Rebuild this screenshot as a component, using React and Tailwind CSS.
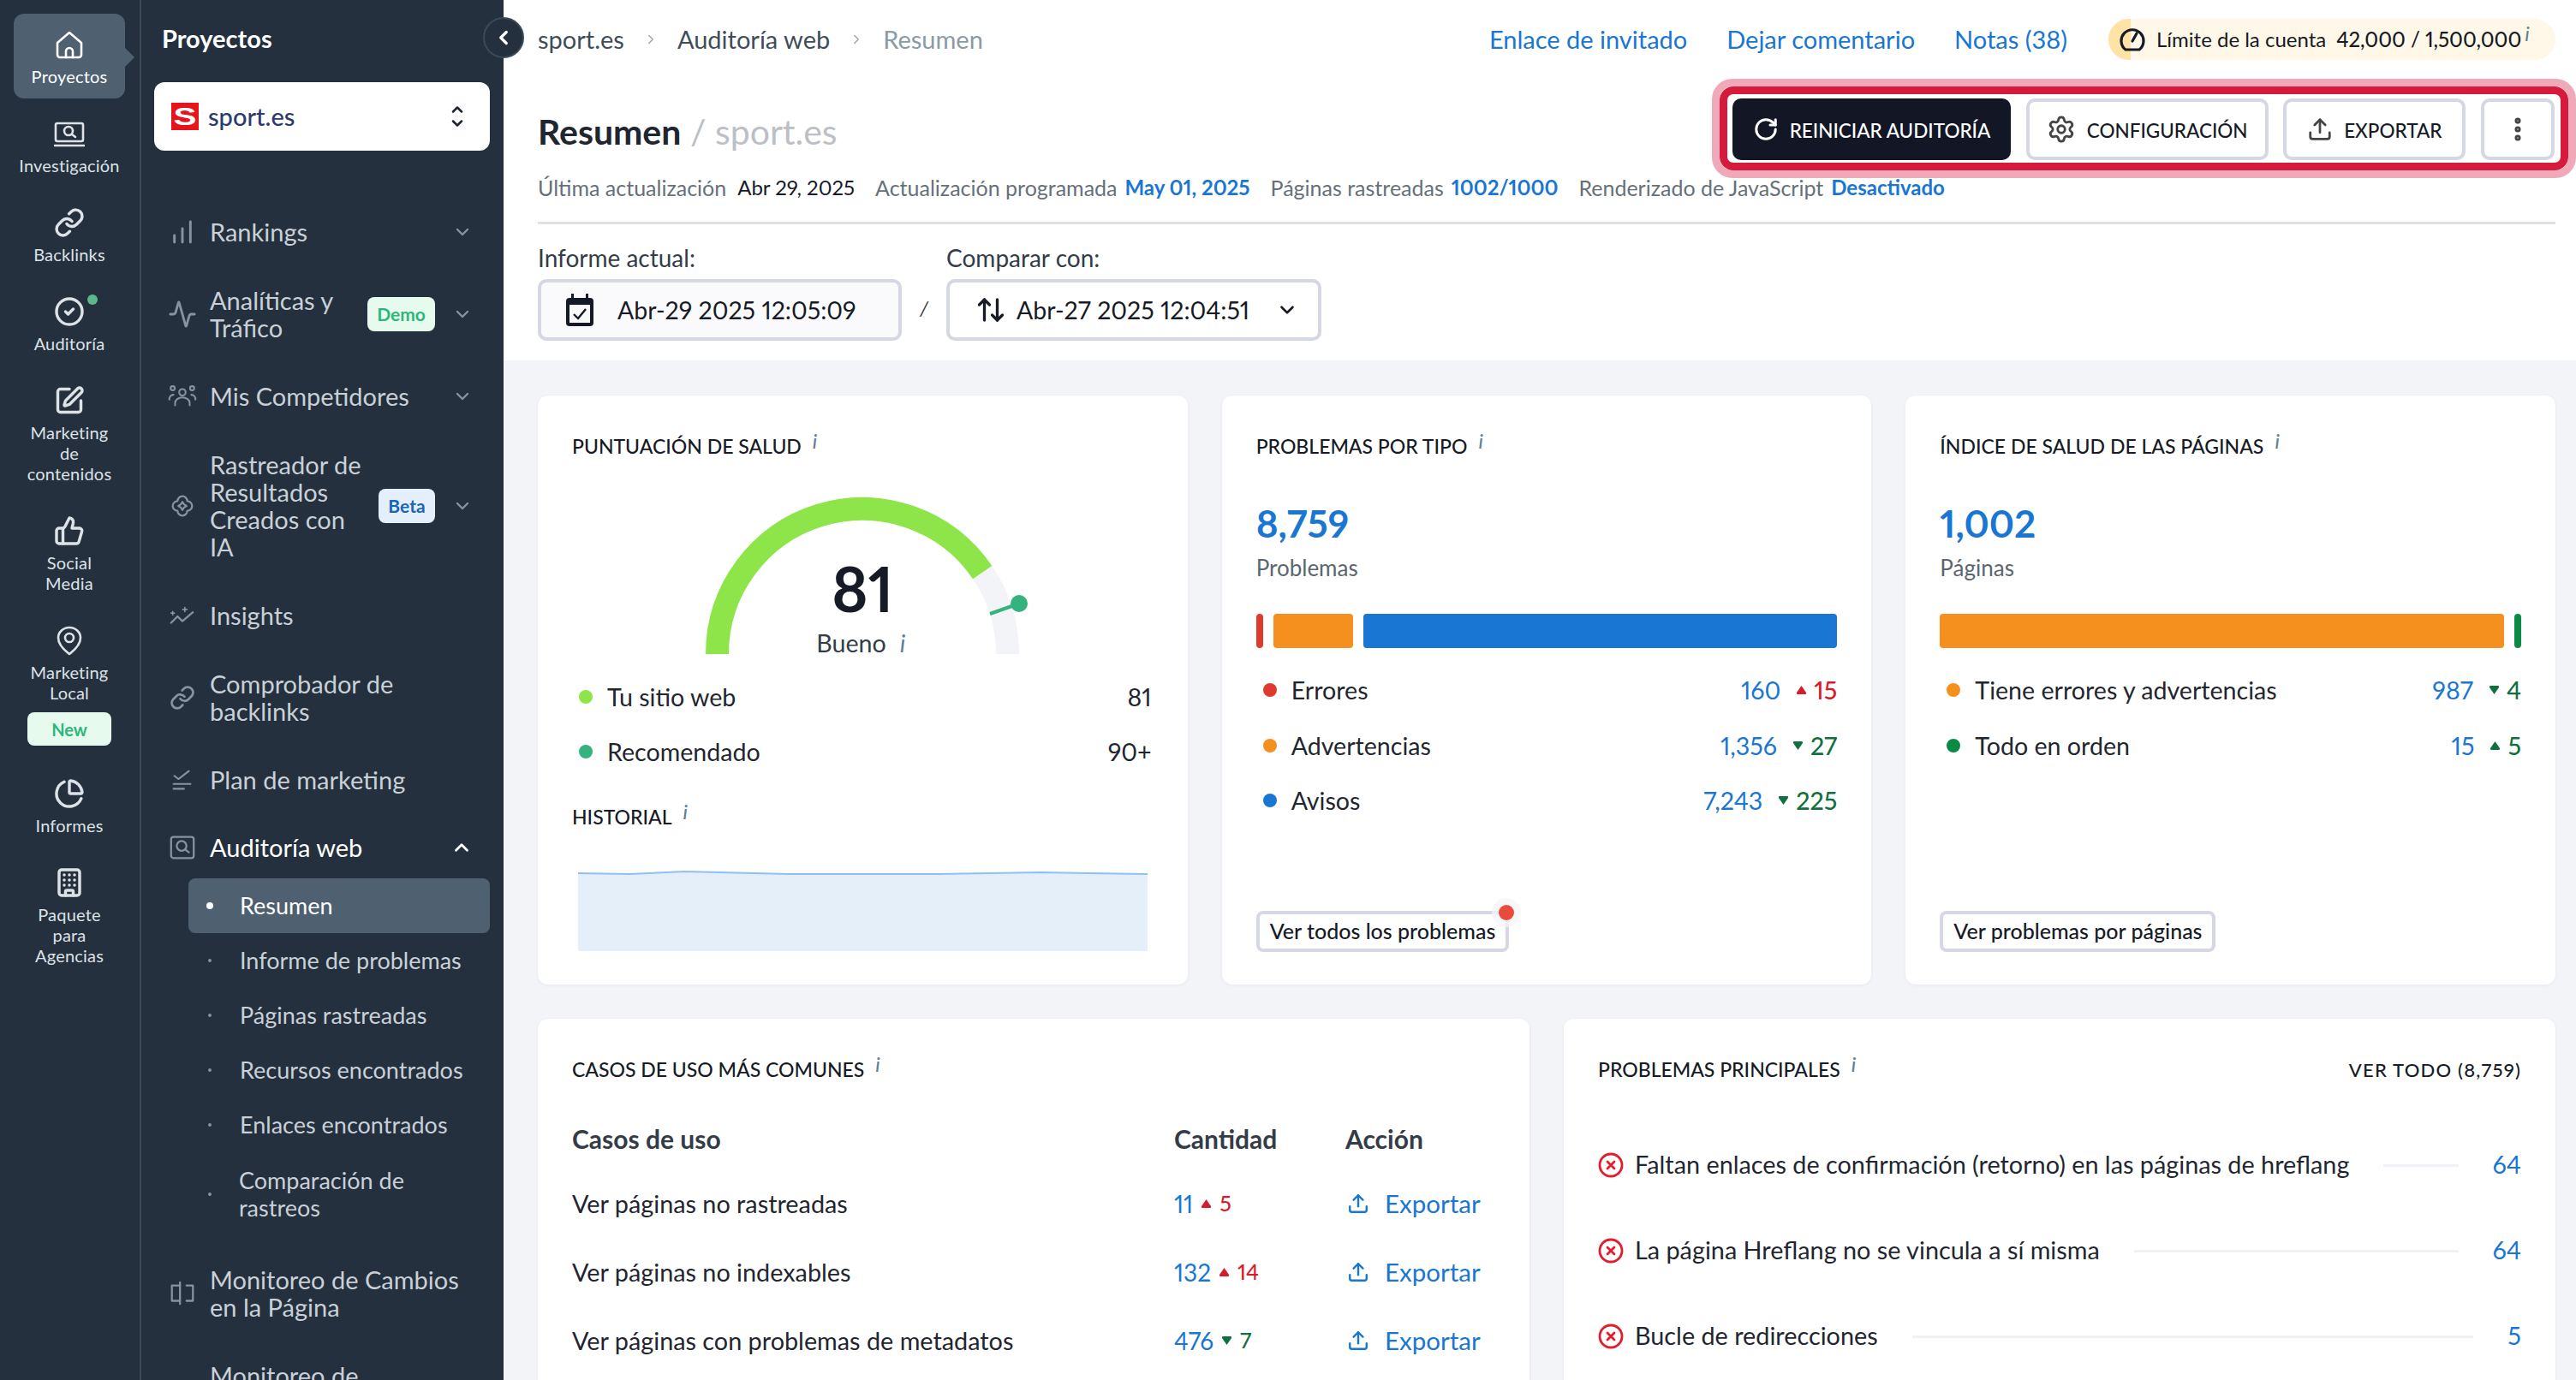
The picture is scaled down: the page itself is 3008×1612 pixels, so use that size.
import React from 'react';
import { Link, CircleCheck, SquarePen, ThumbsUp, ChartPie, Building, ChevronDown, ChevronUp, ChevronLeft, ChevronRight, RotateCw, Settings, Upload, EllipsisVertical, Activity, ChartNoAxesColumnIncreasing, ArrowUpDown } from 'lucide-react';

const I = ({ className = '' }) => <span className={`italic text-[#5e7f98] ${className}`}>i</span>;

const Svg = ({ size = 36, children, sw = 2.6, className = '' }) => (
  <svg width={size} height={size} viewBox="0 0 36 36" fill="none" stroke="currentColor" strokeWidth={sw} strokeLinecap="round" strokeLinejoin="round" className={className}>{children}</svg>
);

const HomeI = () => <Svg><path d="M4 16 L18 4 L32 16 V30 a3 3 0 0 1 -3 3 H7 a3 3 0 0 1 -3 -3Z" /><path d="M14 33 V26 a4 4 0 0 1 8 0 V33" /></Svg>;
const LaptopI = () => <Svg><rect x="2" y="6" width="32" height="21" rx="2" /><circle cx="17" cy="15" r="5" /><path d="M21 19 L25 22" /><path d="M1 32 H35" /></Svg>;
const PinI = () => <Svg><path d="M18 34 C10 28 5 22 5 15 a13 12 0 0 1 26 0 C31 22 26 28 18 34Z" /><circle cx="18" cy="15" r="5" /></Svg>;

const rail = [
  { icon: <HomeI />, label: 'Proyectos', active: true },
  { icon: <LaptopI />, label: 'Investigación' },
  { icon: <Link size={36} strokeWidth={2.3} />, label: 'Backlinks' },
  { icon: <CircleCheck size={36} strokeWidth={2.3} />, label: 'Auditoría', dot: true },
  { icon: <SquarePen size={36} strokeWidth={2.3} />, label: 'Marketing\nde\ncontenidos' },
  { icon: <ThumbsUp size={36} strokeWidth={2.3} />, label: 'Social\nMedia' },
  { icon: <PinI />, label: 'Marketing\nLocal', badge: 'New' },
  { icon: <ChartPie size={36} strokeWidth={2.3} />, label: 'Informes' },
  { icon: <Building size={36} strokeWidth={2.3} />, label: 'Paquete\npara\nAgencias' },
];

const UsersI = () => (
  <Svg size={34} sw={2.2}><circle cx="18" cy="13" r="4" /><circle cx="6" cy="8" r="2.6" /><circle cx="30" cy="8" r="2.6" /><path d="M9 29 v-3 a8 6 0 0 1 18 0 v3" /><path d="M2 22 a5 5 0 0 1 5 -6" /><path d="M34 22 a5 5 0 0 0 -5 -6" /></Svg>
);
const CloverI = () => (
  <Svg size={34} sw={2.4}><path d="M18 6 a6 6 0 0 1 6 6 a6 6 0 0 1 6 6 a6 6 0 0 1 -6 6 a6 6 0 0 1 -12 0 a6 6 0 0 1 -6 -6 a6 6 0 0 1 6 -6 a6 6 0 0 1 6 -6Z" /><path d="M18 13 L20 16 L23 18 L20 20 L18 23 L16 20 L13 18 L16 16Z" /></Svg>
);
const InsightsI = () => (
  <Svg size={34} sw={2.4}><path d="M4 27 L12 19 L18 25 L31 14" /><path d="M6 13 v4 M4 15 h4 M21 8 v5 M18.5 10.5 h5" strokeWidth="1.8" /></Svg>
);
const PlanI = () => (
  <Svg size={34} sw={2.2}><path d="M8 13 L13 17 L26 7" /><path d="M7 23 H28 M7 29 H20" /></Svg>
);
const WebAuditI = () => (
  <Svg size={34} sw={2.4}><rect x="4" y="5" width="28" height="26" rx="3" /><circle cx="17" cy="16" r="6" /><path d="M21.5 20.5 L26 24" /></Svg>
);
const CompareI = () => (
  <Svg size={34} sw={2.4}><path d="M15 8 H5 V27 H15" /><path d="M15 4 V31" /><path d="M23 8 H31 V27 H23" /></Svg>
);

const ic = 'text-[#87939f]';
const nav = [
  { icon: <ChartNoAxesColumnIncreasing size={32} strokeWidth={2.2} />, label: 'Rankings', chev: true, h: 'h-[80px]' },
  { icon: <Activity size={34} strokeWidth={2} />, label: 'Analíticas y\nTráfico', chev: true, badge: 'Demo', h: 'h-[112px]' },
  { icon: <UsersI />, label: 'Mis Competidores', chev: true, h: 'h-[80px]' },
  { icon: <CloverI />, label: 'Rastreador de\nResultados\nCreados con\nIA', chev: true, badge: 'Beta', h: 'h-[176px]' },
  { icon: <InsightsI />, label: 'Insights', h: 'h-[80px]' },
  { icon: <Link size={30} strokeWidth={2.2} />, label: 'Comprobador de\nbacklinks', h: 'h-[112px]' },
  { icon: <PlanI />, label: 'Plan de marketing', h: 'h-[80px]' },
];
const subs = ['Informe de problemas', 'Páginas rastreadas', 'Recursos encontrados', 'Enlaces encontrados'];

function Rail() {
  return (
    <div className="w-[165px] shrink-0 border-r-2 border-[#3c4a58] bg-[#24303d] pl-4 pr-[17px] pt-4 flex flex-col gap-[5px]">
      {rail.map((r) => (
        <div key={r.label} className={`relative flex flex-col items-center pt-[18px] pb-[14px] rounded-[12px] text-[#dde2e7] ${r.active ? 'bg-[#4f6070] text-white' : ''}`}>
          {r.active && <span className="absolute -right-[11px] top-[40px] w-0 h-0 border-y-[11px] border-y-transparent border-l-[11px] border-l-[#4f6070]" />}
          <span className="relative flex h-[36px] items-center justify-center">
            {r.icon}
            {r.dot && <span className="absolute -right-[15px] -top-[2px] h-[12px] w-[12px] rounded-full bg-[#5cb88a]" />}
          </span>
          <span className="mt-[7px] whitespace-pre-line text-center text-[20px] leading-[24px] tracking-[0.2px]">{r.label}</span>
          {r.badge && <span className="mt-[11px] mb-[1px] flex h-[39px] w-[98px] items-center justify-center rounded-[8px] bg-[#e6fbee] text-[20px] font-bold text-[#2fb67c]">{r.badge}</span>}
        </div>
      ))}
    </div>
  );
}

function Panel() {
  return (
    <div className="w-[423px] shrink-0 bg-[#24303d] pl-[15px] pr-4">
      <div className="h-[96px] pt-[24px] pl-[9px] text-[29px] leading-[42px] font-bold text-white">Proyectos</div>
      <div className="flex h-[80px] items-center rounded-[12px] bg-white pl-[20px] pr-[28px]">
        <span className="flex h-[32px] w-[32px] shrink-0 items-center justify-center bg-[#e8141c] font-['Liberation_Sans',sans-serif] text-[30px] font-bold leading-[32px] text-white"><span className="inline-block scale-x-[1.35]">S</span></span>
        <span className="ml-[11px] flex-1 text-[29px] font-medium text-[#2d3a6e]">sport.es</span>
        <span className="flex flex-col text-[#1b2430]"><ChevronUp size={20} strokeWidth={3} className="-mb-[2px]" /><ChevronDown size={20} strokeWidth={3} className="-mt-[2px]" /></span>
      </div>
      <div className="h-[55px]" />
      {nav.map((n) => (
        <div key={n.label} className={`flex ${n.h} items-center pr-[20px] text-[29px] leading-[32px] text-[#c9d0d8]`}>
          <span className={`flex w-[65px] shrink-0 justify-center ${ic}`}>{n.icon}</span>
          <span className="flex-1 whitespace-pre-line">{n.label}</span>
          {n.badge && (
            <span className={`flex h-[40px] items-center justify-center rounded-[8px] text-[21px] font-bold ${n.badge === 'Demo' ? 'w-[79px] bg-[#e6fbee] text-[#2fb67c]' : 'w-[66px] bg-[#e4effb] text-[#1565b8]'}`}>{n.badge}</span>
          )}
          {n.chev && <ChevronDown size={24} strokeWidth={2.4} className="ml-[20px] text-[#87939f]" />}
        </div>
      ))}
      <div className="flex h-[75px] items-center pr-[20px] pt-[3px] text-[29px] leading-[32px] text-white">
        <span className={`flex w-[65px] shrink-0 justify-center ${ic}`}><WebAuditI /></span>
        <span className="flex-1">Auditoría web</span>
        <ChevronUp size={26} strokeWidth={2.6} className="text-white" />
      </div>
      <div className="ml-[40px] flex flex-col text-[27px] leading-[32px] text-[#c9d0d8]">
        <div className="flex h-[64px] items-center rounded-[8px] bg-[#4f6070] text-white">
          <span className="ml-[21px] h-[8px] w-[8px] rounded-full bg-white" />
          <span className="ml-[31px]">Resumen</span>
        </div>
        {subs.map((s) => (
          <div key={s} className="flex h-[64px] items-center">
            <span className="ml-[23px] h-[4px] w-[4px] rounded-full bg-[#87939f]" />
            <span className="ml-[33px]">{s}</span>
          </div>
        ))}
        <div className="flex h-[98px] items-center">
          <span className="ml-[23px] h-[4px] w-[4px] rounded-full bg-[#87939f]" />
          <span className="ml-[32px] whitespace-pre-line">{'Comparación de\nrastreos'}</span>
        </div>
      </div>
      <div className="mt-[11px] flex h-[112px] items-center text-[29px] leading-[32px] text-[#c9d0d8]">
        <span className={`flex w-[65px] shrink-0 justify-center ${ic}`}><CompareI /></span>
        <span className="whitespace-pre-line">{'Monitoreo de Cambios\nen la Página'}</span>
      </div>
      <div className="py-[24px] pl-[65px] text-[29px] leading-[32px] text-[#c9d0d8]">Monitoreo de</div>
    </div>
  );
}

const Btn = ({ icon, children, dark, w }) => (
  <button className={`flex h-[72px] items-center justify-center gap-[13px] rounded-[10px] text-[22.5px] font-medium ${w} ${dark ? 'bg-[#121625] text-white' : 'border-4 border-[#d5d8e4] bg-white text-[#161b26]'}`}>
    {icon}<span className="pt-[3px]">{children}</span>
  </button>
);

function TopBar() {
  return (
    <div className="flex h-[92px] items-center text-[29px]">
      <span className="text-[#3f4d5a]">sport.es</span>
      <ChevronRight size={18} className="mx-[22px] text-[#9aa6b2]" strokeWidth={1.8} />
      <span className="text-[#3f4d5a]">Auditoría web</span>
      <ChevronRight size={18} className="mx-[22px] text-[#9aa6b2]" strokeWidth={1.8} />
      <span className="text-[#8b9aa8]">Resumen</span>
      <div className="ml-auto flex items-center text-[#1976d2]">
        <span>Enlace de invitado</span>
        <span className="ml-[46px]">Dejar comentario</span>
        <span className="ml-[46px]">Notas (38)</span>
        <div className="ml-[48px] flex h-[48px] w-[522px] items-center overflow-hidden rounded-[24px] bg-[#fff8e8] text-[24px] text-[#161b26]">
          <span className="h-full w-[26px] shrink-0 bg-[#ffe3a6]" />
          <svg width="30" height="34" viewBox="0 0 30 34" fill="none" stroke="#161b26" strokeWidth="3.2" strokeLinecap="round" className="-ml-[13px] shrink-0"><path d="M7 29 a13 13 0 1 1 16 0 Z" /><path d="M15 19 L20 10" /></svg>
          <span className="ml-[13px]">Límite de la cuenta</span>
          <span className="ml-[12px] font-medium">42,000 / 1,500,000</span>
          <I className="ml-[4px] -mt-[14px]" />
        </div>
      </div>
    </div>
  );
}

function Header() {
  return (
    <div className="bg-white pl-10 pr-6 pb-[23px]">
      <TopBar />
      <div className="flex h-[116px] items-center justify-between">
        <div className="mt-[8px] text-[41px] leading-[48px]"><span className="font-bold text-[#1f2630]">Resumen</span><span className="text-[#bcc0c6]"> / sport.es</span></div>
        <div className="-mr-6 h-[116px] w-[1009px] rounded-[24px] border-[9px] border-[#f0a9b8]">
          <div className="h-full rounded-[16px] border-[9px] border-[#d61a3c] bg-white pl-[6px] pr-[7px] pt-[5px]">
            <div className="flex justify-between">
              <Btn dark w="w-[325px]" icon={<RotateCw size={30} strokeWidth={2.4} />}>REINICIAR AUDITORÍA</Btn>
              <Btn w="w-[283px]" icon={<Settings size={34} strokeWidth={2} className="text-[#444]" />}>CONFIGURACIÓN</Btn>
              <Btn w="w-[213px]" icon={<Upload size={30} strokeWidth={2.2} className="text-[#444]" />}>EXPORTAR</Btn>
              <button className="flex h-[72px] w-[86px] items-center justify-center rounded-[10px] border-4 border-[#d5d8e4] text-[#444]"><EllipsisVertical size={34} strokeWidth={3} /></button>
            </div>
          </div>
        </div>
      </div>
      <div className="-mt-[5px] flex h-[32px] items-center text-[25px] leading-[32px] text-[#66707a]">
        <span>Última actualización</span><span className="ml-[13px] text-[24px] text-[#161b26]">Abr 29, 2025</span>
        <span className="ml-[24px]">Actualización programada</span><span className="ml-[9px] text-[24px] font-bold text-[#1976d2]">May 01, 2025</span>
        <span className="ml-[24px]">Páginas rastreadas</span><span className="ml-[9px] text-[24px] font-bold text-[#1976d2]">1002/1000</span>
        <span className="ml-[24px]">Renderizado de JavaScript</span><span className="ml-[9px] text-[24px] font-bold text-[#1976d2]">Desactivado</span>
      </div>
      <div className="mt-[24px] h-[3px] bg-[#dfe0ea]" />
      <div className="mt-[23px] flex items-end">
        <div>
          <div className="text-[28px] leading-[32px] text-[#333c47]">Informe actual:</div>
          <div className="mt-[9px] flex h-[72px] w-[425px] items-center rounded-[10px] border-4 border-[#d5d8e4] bg-[#fafafd] pl-[27px] text-[28.5px] text-[#161b26]">
            <svg width="36" height="40" viewBox="0 0 36 40" fill="none" className="shrink-0"><rect x="2" y="6" width="32" height="33" rx="4" fill="#141a28" /><rect x="6" y="14" width="24" height="21" fill="#fafafd" /><rect x="8" y="1" width="3" height="6" fill="#141a28" /><rect x="25" y="1" width="3" height="6" fill="#141a28" /><path d="M11 25 L16 30 L25 19" stroke="#141a28" strokeWidth="2.4" /></svg>
            <span className="ml-[26px]">Abr-29 2025 12:05:09</span>
          </div>
        </div>
        <span className="mx-[21px] mb-[20px] text-[24px] italic text-[#444]">/</span>
        <div>
          <div className="text-[28px] leading-[32px] text-[#333c47]">Comparar con:</div>
          <div className="mt-[9px] flex h-[72px] w-[438px] items-center rounded-[10px] border-4 border-[#d5d8e4] bg-white pl-[30px] text-[28.5px] text-[#161b26]">
            <ArrowUpDown size={36} strokeWidth={2.2} className="shrink-0" />
            <span className="ml-[12px] w-[303px] shrink-0 whitespace-nowrap">Abr-27 2025 12:04:51</span>
            <ChevronDown size={26} strokeWidth={2.4} className="shrink-0" />
          </div>
        </div>
      </div>
    </div>
  );
}

const Card = ({ children, className = '' }) => <div className={`flex flex-col rounded-[12px] bg-white px-10 pb-[38px] pt-[43px] shadow-[0_1px_4px_rgba(30,40,80,0.05)] ${className}`}>{children}</div>;
const Title = ({ children }) => (
  <div className="flex h-[32px] items-center text-[23px] font-medium text-[#161b26]">
    <span>{children}</span>
    <I className="ml-[13px] -mt-[12px]" />
  </div>
);
const Tri = ({ up, color, className = '' }) => (
  <svg width="13" height="12" viewBox="0 0 13 12" className={`shrink-0 ${className}`}><path d={up ? 'M6.5 1 L12 9 Q12.5 11 11 11 H2 Q.5 11 1 9Z' : 'M6.5 11 L12 3 Q12.5 1 11 1 H2 Q.5 1 1 3Z'} fill={color} /></svg>
);
const RED = '#d81b2c';
const GREEN = '#0f7040';
const Row = ({ dot, label, value, up, delta, color }) => (
  <div className="flex h-[32px] items-center pl-2 text-[28.6px] leading-[32px]">
    <span className="h-[16px] w-[16px] rounded-full" style={{ background: dot }} />
    <span className="ml-[17px] flex-1 text-[#1f2630]">{label}</span>
    <span className="text-[#1976d2]">{value}</span>
    <Tri up={up} color={color} className="ml-[18px] mr-[8px]" />
    <span className="font-medium" style={{ color }}>{delta}</span>
  </div>
);

function Gauge() {
  return (
    <div className="relative mx-auto mt-[42px] h-[185px] w-[400px]">
      <svg width="400" height="185" viewBox="0 0 400 185" fill="none">
        <path d="M340.2 89.7 A169.5 169.5 0 0 1 369.5 185" stroke="#f3f4f8" strokeWidth="27" />
        <path d="M30.5 185 A169.5 169.5 0 0 1 340.2 89.7" stroke="#8de549" strokeWidth="27" />
        <path d="M349 138 L383 126" stroke="#35b37e" strokeWidth="4" />
        <circle cx="383" cy="126" r="10" fill="#35b37e" />
      </svg>
      <div className="absolute inset-x-0 top-[72px] text-center text-[72px] font-bold leading-[72px] text-[#161b26]">81</div>
      <div className="absolute inset-x-0 top-[156px] flex justify-center pr-[4px] text-[28.6px] leading-[32px] text-[#333c47]"><span>Bueno</span><I className="ml-[16px]" /></div>
    </div>
  );
}

function Card1() {
  return (
    <Card>
      <Title>PUNTUACIÓN DE SALUD</Title>
      <Gauge />
      <div className="mt-[34px] flex h-[32px] items-center pl-2 pr-[2px] text-[28.6px] text-[#1f2630]"><span className="h-[16px] w-[16px] rounded-full bg-[#8de549]" /><span className="ml-[17px] flex-1">Tu sitio web</span><span>81</span></div>
      <div className="mt-[32px] flex h-[32px] items-center pl-2 pr-[2px] text-[28.6px] text-[#1f2630]"><span className="h-[16px] w-[16px] rounded-full bg-[#35b37e]" /><span className="ml-[17px] flex-1">Recomendado</span><span>90+</span></div>
      <div className="mt-[44px]"><Title>HISTORIAL</Title></div>
      <svg className="mx-[7px] mt-[47px]" width="665" height="94" viewBox="0 0 665 94" fill="none">
        <path d="M0 3 L60 4 L125 1 L245 4 L420 4 L540 2 L665 4 V94 H0Z" fill="#e5eff9" />
        <path d="M0 3 L60 4 L125 1 L245 4 L420 4 L540 2 L665 4" stroke="#90c0f0" strokeWidth="2" />
      </svg>
    </Card>
  );
}

const Big = ({ value, label }) => (
  <>
    <div className="mt-[46px] text-[44px] font-bold leading-[56px] text-[#1976d2]">{value}</div>
    <div className="mt-[8px] text-[26px] leading-[32px] text-[#5b6670]">{label}</div>
  </>
);
const Outline = ({ children, dot }) => (
  <span className="relative mt-auto inline-flex h-[48px] w-fit items-center rounded-[8px] border-4 border-[#d5d8e4] bg-white px-[12px] text-[25px] font-medium text-[#161b26]">
    {children}
    {dot && <span className="absolute -right-[10px] -top-[11px] h-[18px] w-[18px] rounded-full bg-[#e94b3c] shadow-[0_0_0_8px_rgba(245,245,248,0.7)]" />}
  </span>
);

function Card2() {
  return (
    <Card>
      <Title>PROBLEMAS POR TIPO</Title>
      <Big value="8,759" label="Problemas" />
      <div className="mt-[38px] flex h-[40px] gap-[12px]">
        <span className="w-[8px] rounded-[4px] bg-[#de3b2e]" />
        <span className="w-[93px] rounded-[4px] bg-[#f58f1e]" />
        <span className="flex-1 rounded-[4px] bg-[#1976d2]" />
      </div>
      <div className="mt-[33px] flex flex-col gap-[32.5px]">
        <Row dot="#de3b2e" label="Errores" value="160" up delta="15" color={RED} />
        <Row dot="#f58f1e" label="Advertencias" value="1,356" delta="27" color={GREEN} />
        <Row dot="#1976d2" label="Avisos" value="7,243" delta="225" color={GREEN} />
      </div>
      <Outline dot>Ver todos los problemas</Outline>
    </Card>
  );
}

function Card3() {
  return (
    <Card>
      <Title>ÍNDICE DE SALUD DE LAS PÁGINAS</Title>
      <Big value="1,002" label="Páginas" />
      <div className="mt-[38px] flex h-[40px] gap-[12px]">
        <span className="flex-1 rounded-[4px] bg-[#f58f1e]" />
        <span className="w-[8px] rounded-[4px] bg-[#0b8a45]" />
      </div>
      <div className="mt-[33px] flex flex-col gap-[32.5px]">
        <Row dot="#f58f1e" label="Tiene errores y advertencias" value="987" delta="4" color={GREEN} />
        <Row dot="#0b8a45" label="Todo en orden" value="15" up delta="5" color={GREEN} />
      </div>
      <Outline>Ver problemas por páginas</Outline>
    </Card>
  );
}

const uses = [
  ['Ver páginas no rastreadas', '11', true, '5', RED],
  ['Ver páginas no indexables', '132', true, '14', RED],
  ['Ver páginas con problemas de metadatos', '476', false, '7', GREEN],
];

function Card4() {
  return (
    <Card className="h-[500px]">
      <Title>CASOS DE USO MÁS COMUNES</Title>
      <div className="mt-[43px] grid h-[32px] grid-cols-[703px_200px_1fr] items-center text-[30px] font-bold text-[#333c47]">
        <span>Casos de uso</span><span>Cantidad</span><span>Acción</span>
      </div>
      <div className="mt-[44px] flex flex-col gap-[48px]">
        {uses.map(([l, v, up, d, c]) => (
          <div key={l} className="grid h-[32px] grid-cols-[703px_200px_1fr] items-center text-[28.8px] text-[#1f2630]">
            <span>{l}</span>
            <span className="flex items-center text-[28px]"><span className="text-[#1976d2]">{v}</span><Tri up={up} color={c} className="mx-[9px]" /><span className="font-medium text-[25px]" style={{ color: c }}>{d}</span></span>
            <span className="flex items-center text-[#1976d2]"><Upload size={26} strokeWidth={2.2} className="ml-[2px]" /><span className="ml-[18px] text-[29.5px]">Exportar</span></span>
          </div>
        ))}
      </div>
    </Card>
  );
}

const problems = [
  ['Faltan enlaces de confirmación (retorno) en las páginas de hreflang', '64'],
  ['La página Hreflang no se vincula a sí misma', '64'],
  ['Bucle de redirecciones', '5'],
];

function Card5() {
  return (
    <Card className="h-[500px]">
      <div className="flex items-center justify-between">
        <Title>PROBLEMAS PRINCIPALES</Title>
        <span className="text-[22px] font-medium tracking-[1.2px] text-[#161b26]">VER TODO (8,759)</span>
      </div>
      <div className="mt-[79px] flex flex-col gap-[68px]">
        {problems.map(([l, v]) => (
          <div key={l} className="flex h-[32px] items-center text-[28.8px] text-[#1f2630]">
            <svg width="30" height="30" viewBox="0 0 30 30" fill="none" stroke="#e01e2d" strokeWidth="2.8" strokeLinecap="round" className="shrink-0"><circle cx="15" cy="15" r="13" /><path d="M11 11 L19 19 M19 11 L11 19" /></svg>
            <span className="ml-[13px] whitespace-nowrap">{l}</span>
            <span className="mx-[40px] h-[3px] flex-1 bg-[#f0f1f6]" />
            <span className="text-[#1976d2]">{v}</span>
          </div>
        ))}
      </div>
    </Card>
  );
}

export default function App() {
  return (
    <div className="relative flex h-[1612px] w-[3008px] overflow-hidden bg-[#f3f4f8] font-['Lato',sans-serif] proportional-nums">
      <Rail />
      <Panel />
      <button className="absolute left-[564px] top-[20px] z-10 flex h-[48px] w-[48px] items-center justify-center rounded-full border-2 border-[#3c4a58] bg-[#24303d] text-white"><ChevronLeft size={26} strokeWidth={3} /></button>
      <div className="flex min-w-0 flex-1 flex-col">
        <Header />
        <div className="flex flex-col gap-[40px] pl-10 pr-6 pt-[41px]">
          <div className="grid h-[688px] grid-cols-3 gap-[40px]">
            <Card1 /><Card2 /><Card3 />
          </div>
          <div className="grid grid-cols-2 gap-[40px]">
            <Card4 /><Card5 />
          </div>
        </div>
      </div>
    </div>
  );
}
